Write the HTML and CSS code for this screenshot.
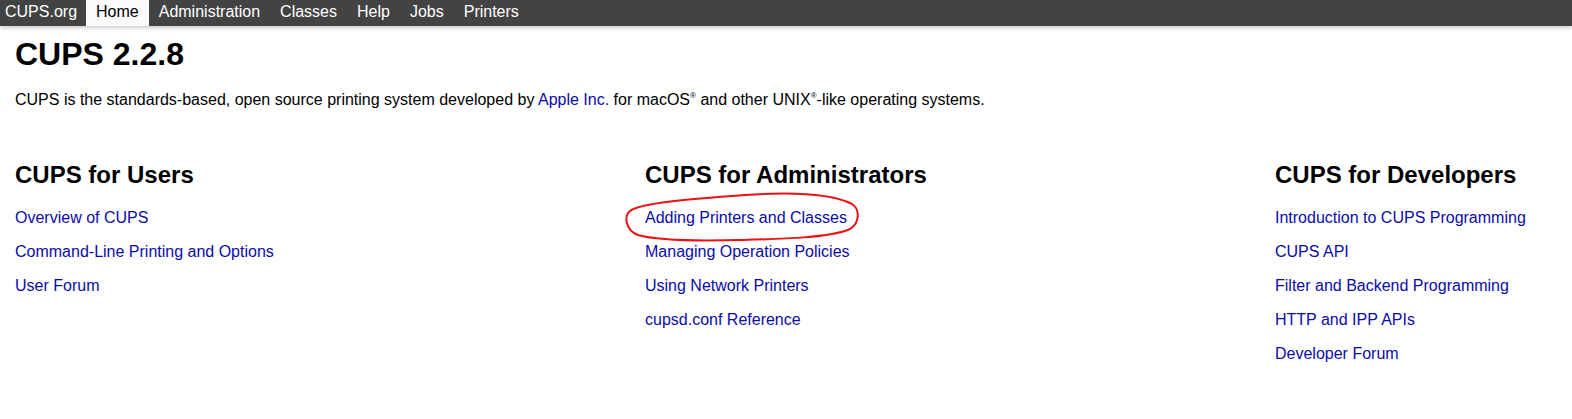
FILE: index.html
```html
<!DOCTYPE html>
<html>
<head>
<meta charset="utf-8">
<title>Home - CUPS 2.2.8</title>
<link rel="stylesheet" href="styles.css">
</head>
<body>
<nav class="header">
  <a class="nav-item first" href="#">CUPS.org</a>
  <a class="nav-item active" href="#">Home</a>
  <a class="nav-item" href="#">Administration</a>
  <a class="nav-item" href="#">Classes</a>
  <a class="nav-item" href="#">Help</a>
  <a class="nav-item" href="#">Jobs</a>
  <a class="nav-item" href="#">Printers</a>
</nav>
<main class="body">
  <h1 class="title">CUPS 2.2.8</h1>
  <p class="intro">CUPS is the standards-based, open source printing system developed by <a class="link" href="#">Apple Inc.</a> for macOS<sup class="reg">®</sup> and other UNIX<sup class="reg">®</sup>-like operating systems.</p>
  <div class="columns">
    <section class="col">
      <h2 class="col-title">CUPS for Users</h2>
      <ul class="links">
        <li><a class="link" href="#">Overview of CUPS</a></li>
        <li><a class="link" href="#">Command-Line Printing and Options</a></li>
        <li><a class="link" href="#">User Forum</a></li>
      </ul>
    </section>
    <section class="col">
      <h2 class="col-title">CUPS for Administrators</h2>
      <ul class="links">
        <li class="circled"><a class="link" href="#">Adding Printers and Classes</a>
          <svg class="scribble" width="245" height="56" viewBox="0 0 245 56"><path d="M125 6 C170 3 210 4 232 15 C240 20 240 34 230 40 C210 49 160 50 120 51 C80 52 35 51 18 46 C5 41 4 27 10 22 C20 14 70 10 125 6 Z" fill="none" stroke="#ee1111" stroke-width="2" stroke-linecap="round"/></svg>
        </li>
        <li><a class="link" href="#">Managing Operation Policies</a></li>
        <li><a class="link" href="#">Using Network Printers</a></li>
        <li><a class="link" href="#">cupsd.conf Reference</a></li>
      </ul>
    </section>
    <section class="col">
      <h2 class="col-title">CUPS for Developers</h2>
      <ul class="links">
        <li><a class="link" href="#">Introduction to CUPS Programming</a></li>
        <li><a class="link" href="#">CUPS API</a></li>
        <li><a class="link" href="#">Filter and Backend Programming</a></li>
        <li><a class="link" href="#">HTTP and IPP APIs</a></li>
        <li><a class="link" href="#">Developer Forum</a></li>
      </ul>
    </section>
  </div>
</main>
</body>
</html>
```
FILE: styles.css
```css
html, body {
  margin: 0;
  padding: 0;
  background: #ffffff;
  font-family: "Liberation Sans", Arial, sans-serif;
  color: #000;
}
.header {
  display: flex;
  height: 26px;
  background: #434343;
  box-shadow: 0 2px 4px rgba(0,0,0,0.2);
}
.nav-item {
  display: block;
  padding: 0 10px;
  height: 26px;
  line-height: 23px;
  font-size: 16px;
  color: #ffffff;
  text-decoration: none;
}
.nav-item.first {
  padding-left: 5px;
  padding-right: 9px;
}
.nav-item.active {
  background: #fbfbfb;
  color: #000;
}
.body {
  padding: 10px 15px 0 15px;
}
.title {
  margin: 0;
  font-size: 32px;
  line-height: 37px;
  font-weight: bold;
}
.intro {
  margin: 18px 0 0 0;
  font-size: 16px;
  line-height: 18px;
}
.reg {
  font-size: 8px;
  vertical-align: 7px;
  line-height: 0;
}
.link {
  color: #0b0ba8;
  text-decoration: none;
}
.columns {
  display: grid;
  grid-template-columns: 630px 630px 1fr;
  margin-top: 52px;
}
.col-title {
  margin: 0;
  font-size: 24px;
  line-height: 28px;
  font-weight: bold;
}
.links {
  list-style: none;
  margin: 20px 0 0 0;
  padding: 0;
  display: flex;
  flex-direction: column;
  gap: 16px;
  font-size: 16px;
  line-height: 18px;
}
.circled {
  position: relative;
}
.scribble {
  position: absolute;
  left: -25px;
  top: -20px;
  pointer-events: none;
}
```
